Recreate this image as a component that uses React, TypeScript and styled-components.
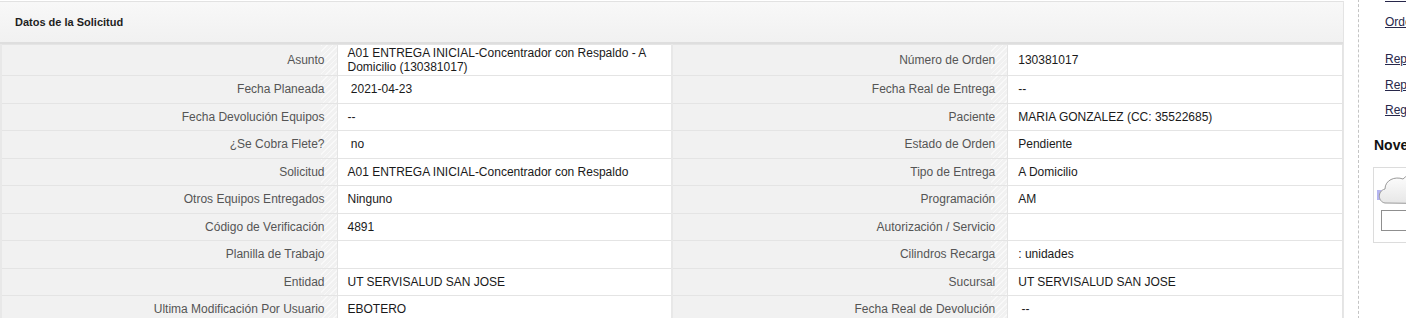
import React from 'react';
import styled, { createGlobalStyle } from 'styled-components';

const GlobalStyle = createGlobalStyle`
  html, body {
    margin: 0;
    padding: 0;
    background: #ffffff;
    overflow: hidden;
  }
  body {
    font-family: "Liberation Sans", Arial, sans-serif;
    font-size: 12px;
    color: #222;
  }
`;

const Page = styled.div`
  display: flex;
  align-items: flex-start;
  width: 1406px;
  overflow: hidden;
`;

const Panel = styled.div`
  width: 1343px;
  flex: none;
  margin-top: 1px;
  border-top: 1px solid #e2e2e2;
  border-right: 1px solid #e6e6e6;
`;

const PanelHeader = styled.div`
  height: 40px;
  display: flex;
  align-items: center;
  padding-left: 15px;
  background: linear-gradient(to bottom, #f8f8f8, #f1f1f1);
  border-bottom: 2px solid #dedede;
  box-shadow: 0 1px 1px rgba(0, 0, 0, 0.06);
  font-size: 11px;
  font-weight: bold;
  color: #1e1e1e;
`;

const Table = styled.table`
  width: 100%;
  border-collapse: collapse;
  table-layout: fixed;
`;

const Row = styled.tr<{ $tall?: boolean }>`
  height: ${p => (p.$tall ? '31px' : '27.5px')};
`;

const LabelCell = styled.td`
  width: 336px;
  box-sizing: border-box;
  padding: 0 12px 0 4px;
  text-align: right;
  color: #555;
  background-color: #f1f1f1;
  background-image: repeating-linear-gradient(
    135deg,
    rgba(255, 255, 255, 0.55) 0 1px,
    transparent 1px 4px
  );
  background-size: 16px 100%;
  background-position: right top;
  background-repeat: no-repeat;
  border: 1px solid #e4e4e4;
  border-left: 2px solid #e8e8e8;
  line-height: 14px;
`;

const ValueCell = styled.td`
  box-sizing: border-box;
  padding: 0 12px 0 10px;
  text-align: left;
  color: #1a1a1a;
  background: #fff;
  border: 1px solid #e4e4e4;
  line-height: 14px;
  vertical-align: middle;
`;

const Sidebar = styled.div`
  flex: none;
  width: 200px;
  margin-left: 14px;
  border-left: 1px dashed #c4c4c4;
  box-sizing: border-box;
  padding-left: 26px;
  margin-top: -11px;
  height: 340px;
`;

const LinkGroup = styled.div<{ $gap?: number }>`
  display: flex;
  flex-direction: column;
  gap: 11px;
  margin-bottom: ${p => p.$gap ?? 0}px;
`;

const SideLink = styled.a`
  color: #27274a;
  text-decoration: underline;
  font-size: 12px;
  line-height: 14.5px;
  white-space: nowrap;
`;

const SectionTitle = styled.div`
  margin: 19px 0 0 -11px;
  font-size: 14px;
  font-weight: bold;
  color: #111;
  white-space: nowrap;
`;

const NewsBox = styled.div`
  margin: 14px 0 0 -12px;
  width: 150px;
  height: 76px;
  border: 1px solid #dcdcdc;
  box-sizing: border-box;
  padding: 4px 0 0 3px;
`;

const NewsInput = styled.div`
  margin: 3px 0 0 4px;
  width: 120px;
  height: 21px;
  border: 1px solid #8f8f8f;
  box-sizing: border-box;
  background: #fff;
`;

const Cloud = () => (
  <svg width="120" height="35" viewBox="0 0 120 35" style={{ display: 'block' }}>
    <defs>
      <linearGradient id="sky" x1="0" y1="0" x2="1" y2="0">
        <stop offset="0" stopColor="#b4b4f0" />
        <stop offset="0.5" stopColor="#ececfc" />
        <stop offset="1" stopColor="#ffffff" />
      </linearGradient>
      <linearGradient id="cloudFill" x1="0" y1="0" x2="0" y2="1">
        <stop offset="0" stopColor="#ffffff" />
        <stop offset="1" stopColor="#e6e6e6" />
      </linearGradient>
    </defs>
    <rect x="0" y="18" width="120" height="10" fill="url(#sky)" />
    <path
      d="M8 31 C1 30 0 19 8 17 C8 8 18 4 26 7 C32 0 48 -1 56 6 C68 2 82 7 82 17 C92 18 94 30 84 32 Z"
      fill="url(#cloudFill)"
      stroke="#9a9a9a"
      strokeWidth="1"
    />
  </svg>
);

type Pair = { label: string; value: string };
type RowData = { left: Pair; right: Pair; tall?: boolean };

const rows: RowData[] = [
  {
    left: { label: 'Asunto', value: 'A01 ENTREGA INICIAL-Concentrador con Respaldo - A Domicilio (130381017)' },
    right: { label: 'Número de Orden', value: '130381017' },
    tall: true,
  },
  { left: { label: 'Fecha Planeada', value: '\u00a02021-04-23' }, right: { label: 'Fecha Real de Entrega', value: '--' } },
  { left: { label: 'Fecha Devolución Equipos', value: '--' }, right: { label: 'Paciente', value: 'MARIA GONZALEZ (CC: 35522685)' } },
  { left: { label: '¿Se Cobra Flete?', value: '\u00a0no' }, right: { label: 'Estado de Orden', value: 'Pendiente' } },
  { left: { label: 'Solicitud', value: 'A01 ENTREGA INICIAL-Concentrador con Respaldo' }, right: { label: 'Tipo de Entrega', value: 'A Domicilio' } },
  { left: { label: 'Otros Equipos Entregados', value: 'Ninguno' }, right: { label: 'Programación', value: 'AM' } },
  { left: { label: 'Código de Verificación', value: '4891' }, right: { label: 'Autorización / Servicio', value: '' } },
  { left: { label: 'Planilla de Trabajo', value: '' }, right: { label: 'Cilindros Recarga', value: ': unidades' } },
  { left: { label: 'Entidad', value: 'UT SERVISALUD SAN JOSE' }, right: { label: 'Sucursal', value: 'UT SERVISALUD SAN JOSE' } },
  { left: { label: 'Ultima Modificación Por Usuario', value: 'EBOTERO' }, right: { label: 'Fecha Real de Devolución', value: '\u00a0--' } },
];

const App: React.FC = () => {
  return (
    <>
      <GlobalStyle />
      <Page>
        <Panel>
          <PanelHeader>Datos de la Solicitud</PanelHeader>
          <Table>
            <tbody>
              {rows.map((r, i) => (
                <Row key={i} $tall={r.tall}>
                  <LabelCell>{r.left.label}</LabelCell>
                  <ValueCell>{r.left.value}</ValueCell>
                  <LabelCell>{r.right.label}</LabelCell>
                  <ValueCell>{r.right.value}</ValueCell>
                </Row>
              ))}
            </tbody>
          </Table>
        </Panel>

        <Sidebar>
          <LinkGroup $gap={23}>
            <SideLink href="#">Órdenes Pendientes</SideLink>
            <SideLink href="#">Ordenes</SideLink>
          </LinkGroup>
          <LinkGroup>
            <SideLink href="#">Reportes</SideLink>
            <SideLink href="#">Reportes</SideLink>
            <SideLink href="#">Registro</SideLink>
          </LinkGroup>
          <SectionTitle>Novedades</SectionTitle>
          <NewsBox>
            <Cloud />
            <NewsInput />
          </NewsBox>
        </Sidebar>
      </Page>
    </>
  );
};

export default App;
